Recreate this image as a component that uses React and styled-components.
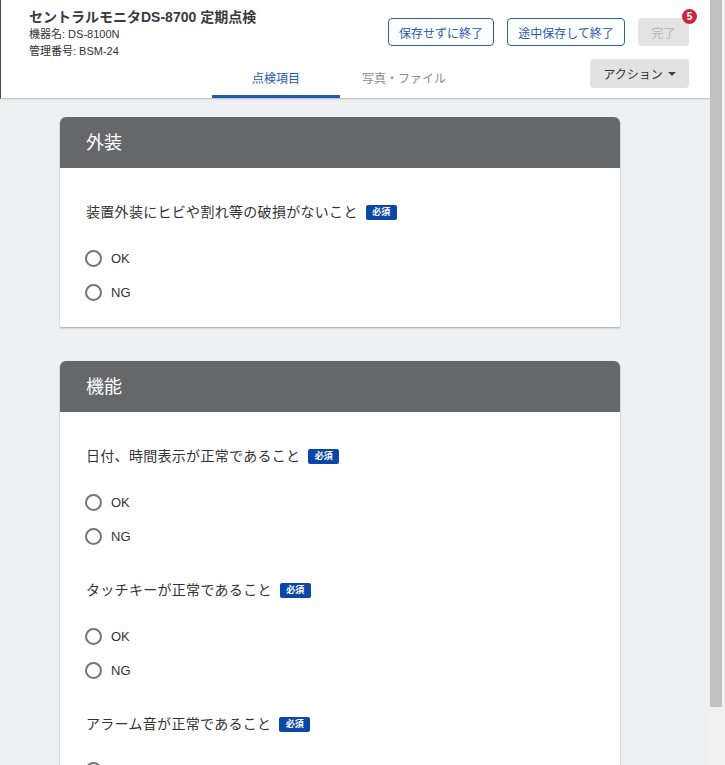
import React from 'react';
import styled, { createGlobalStyle } from 'styled-components';

const GlobalStyle = createGlobalStyle`
  html, body {
    margin: 0;
    padding: 0;
    height: 100%;
    overflow: hidden;
  }
  body {
    font-family: "Liberation Sans", "Noto Sans CJK JP", sans-serif;
    color: #333;
  }
`;

const Page = styled.div`
  display: flex;
  width: 725px;
  height: 765px;
  overflow: hidden;
  background: #fff;
`;

const Main = styled.div`
  flex: 1;
  display: flex;
  flex-direction: column;
  min-width: 0;
`;

const ScrollTrack = styled.div`
  width: 15px;
  flex-shrink: 0;
  background: #f1f1f1;
  display: flex;
  flex-direction: column;
`;

const ScrollThumb = styled.div`
  width: 12px;
  height: 707px;
  background: #c1c1c1;
`;

const Header = styled.header`
  background: #fff;
  border-left: 1px solid #4a4a4a;
  border-bottom: 1px solid #c6c6c6;
  box-shadow: 0 1px 2px rgba(0, 0, 0, 0.08);
  position: relative;
  z-index: 1;
`;

const TopRow = styled.div`
  display: flex;
  height: 59px;
`;

const Info = styled.div`
  padding: 8px 0 0 28px;
`;

const Title = styled.h1`
  margin: 0;
  font-size: 14px;
  font-weight: bold;
  line-height: 18px;
  color: #3a3a3a;
`;

const Meta = styled.div`
  font-size: 11px;
  line-height: 17px;
  color: #333;
`;

const Actions = styled.div`
  margin-left: auto;
  margin-right: 21px;
  padding-top: 18px;
  display: flex;
  gap: 13px;
  align-items: flex-start;
`;

const OutlineButton = styled.button`
  width: ${(p) => p.$w}px;
  height: 28px;
  padding: 0;
  white-space: nowrap;
  border: 1px solid #2962b4;
  border-radius: 4px;
  background: #fff;
  color: #1f5bb0;
  font-family: inherit;
  font-size: 12px;
`;

const DoneWrap = styled.div`
  position: relative;
`;

const DisabledButton = styled.button`
  width: 51px;
  height: 28px;
  padding: 0;
  border: none;
  border-radius: 4px;
  background: #e3e3e3;
  color: #b3b3b3;
  font-family: inherit;
  font-size: 12px;
`;

const Badge = styled.span`
  position: absolute;
  top: -9px;
  right: -8px;
  width: 15px;
  height: 15px;
  border-radius: 50%;
  background: #c8283c;
  color: #fff;
  font-size: 10px;
  font-weight: bold;
  display: flex;
  align-items: center;
  justify-content: center;
`;

const TabRow = styled.div`
  display: flex;
  height: 39px;
`;

const Tabs = styled.nav`
  display: flex;
  margin-left: 211px;
`;

const Tab = styled.div`
  width: 128px;
  display: flex;
  align-items: center;
  justify-content: center;
  font-size: 12px;
  color: ${(p) => (p.$active ? '#1f5bb0' : '#8a8a8a')};
  border-bottom: 3px solid ${(p) => (p.$active ? '#1f5bb0' : 'transparent')};
`;

const ActionButton = styled.button`
  margin-left: auto;
  margin-right: 21px;
  width: 99px;
  height: 29px;
  padding: 0;
  border: none;
  border-radius: 4px;
  background: #e2e2e2;
  color: #333;
  font-family: inherit;
  font-size: 12px;
  display: flex;
  align-items: center;
  justify-content: center;
  gap: 5px;
`;

const Caret = styled.span`
  width: 0;
  height: 0;
  border-left: 4px solid transparent;
  border-right: 4px solid transparent;
  border-top: 4px solid #444;
`;

const Content = styled.main`
  flex: 1;
  background: #eff0f4;
  padding: 18px 0 0 60px;
  overflow: hidden;
  display: flex;
  flex-direction: column;
  gap: 34px;
`;

const Card = styled.section`
  width: 560px;
  background: #fff;
  border-radius: 6px 6px 0 0;
  box-shadow: 0 1px 2px rgba(0, 0, 0, 0.35);
  flex-shrink: 0;
`;

const CardHeader = styled.h2`
  margin: 0;
  height: 51px;
  box-sizing: border-box;
  padding: 0 0 4px 26px;
  display: flex;
  align-items: center;
  background: #66676b;
  color: #fff;
  font-size: 18px;
  font-weight: normal;
  border-radius: 6px 6px 0 0;
`;

const CardBody = styled.div`
  padding: 34px 26px 18px;
  display: flex;
  flex-direction: column;
  gap: 27px;
`;

const Question = styled.div``;

const QuestionText = styled.div`
  display: flex;
  align-items: center;
  gap: 8px;
  font-size: 14px;
  letter-spacing: 0.3px;
  line-height: 20px;
  color: #333;
  margin-bottom: 19px;
`;

const Required = styled.span`
  display: inline-flex;
  align-items: center;
  justify-content: center;
  width: 31px;
  height: 15px;
  background: #0c47a8;
  color: #fff;
  border-radius: 2px;
  font-size: 9px;
  letter-spacing: 0;
  font-weight: bold;
`;

const Option = styled.label`
  display: flex;
  align-items: center;
  gap: 9px;
  height: 34px;
  font-size: 13px;
  color: #333;
`;

const RadioCircle = styled.span`
  box-sizing: border-box;
  width: 17px;
  height: 17px;
  border: 2px solid #757575;
  border-radius: 50%;
  margin-left: -1px;
`;

const sections = [
  { title: '外装', items: ['装置外装にヒビや割れ等の破損がないこと'] },
  {
    title: '機能',
    items: ['日付、時間表示が正常であること', 'タッチキーが正常であること', 'アラーム音が正常であること'],
  },
];

const App = () => {
  return (
    <Page>
      <GlobalStyle />
      <Main>
        <Header>
          <TopRow>
            <Info>
              <Title>セントラルモニタDS-8700 定期点検</Title>
              <Meta>機器名: DS-8100N</Meta>
              <Meta>管理番号: BSM-24</Meta>
            </Info>
            <Actions>
              <OutlineButton $w={106}>保存せずに終了</OutlineButton>
              <OutlineButton $w={118}>途中保存して終了</OutlineButton>
              <DoneWrap>
                <DisabledButton>完了</DisabledButton>
                <Badge>5</Badge>
              </DoneWrap>
            </Actions>
          </TopRow>
          <TabRow>
            <Tabs>
              <Tab $active>点検項目</Tab>
              <Tab>写真・ファイル</Tab>
            </Tabs>
            <ActionButton>
              アクション
              <Caret />
            </ActionButton>
          </TabRow>
        </Header>
        <Content>
          {sections.map((s) => (
            <Card key={s.title}>
              <CardHeader>{s.title}</CardHeader>
              <CardBody>
                {s.items.map((q) => (
                  <Question key={q}>
                    <QuestionText>
                      {q}
                      <Required>必須</Required>
                    </QuestionText>
                    <Option>
                      <RadioCircle />
                      OK
                    </Option>
                    <Option>
                      <RadioCircle />
                      NG
                    </Option>
                  </Question>
                ))}
              </CardBody>
            </Card>
          ))}
        </Content>
      </Main>
      <ScrollTrack>
        <ScrollThumb />
      </ScrollTrack>
    </Page>
  );
};

export default App;
